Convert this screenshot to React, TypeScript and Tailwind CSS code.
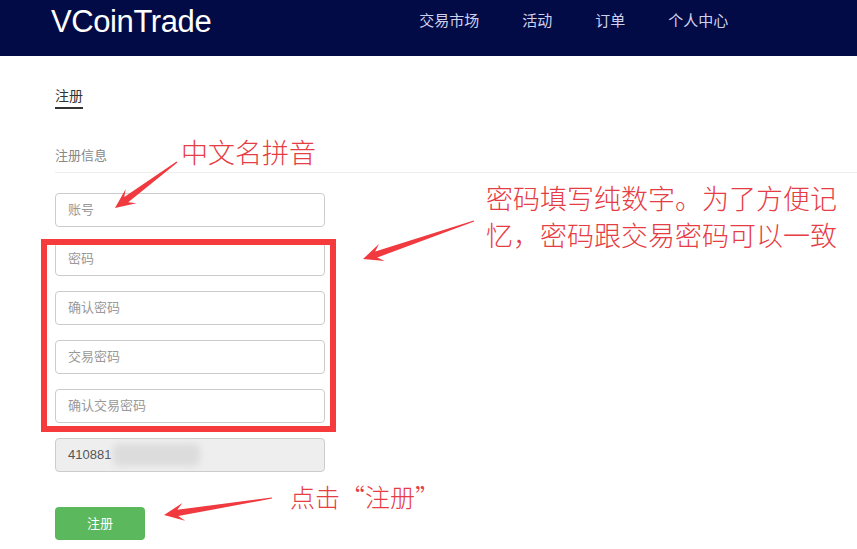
const NAV = ["交易市场", "活动", "订单", "个人中心"];

const PASSWORD_FIELDS = ["密码", "确认密码", "交易密码", "确认交易密码"];

type Pt = [number, number];

// red hand-drawn style arrow: thin tail, widening shaft, notched head
function arrowPoints(tail: Pt, tip: Pt): string {
  const dx = tip[0] - tail[0];
  const dy = tip[1] - tail[1];
  const len = Math.hypot(dx, dy);
  const d: Pt = [dx / len, dy / len];
  const n: Pt = [-d[1], d[0]];
  const H = 20;
  const at = (base: Pt, back: number, side: number): string =>
    `${(base[0] - d[0] * back + n[0] * side).toFixed(1)},${(base[1] - d[1] * back + n[1] * side).toFixed(1)}`;
  return [
    at(tail, 0, 0.6),
    at(tip, H * 0.7, 3.2),
    at(tip, H, 9),
    at(tip, 0, 0),
    at(tip, H, -9),
    at(tip, H * 0.7, -3.2),
    at(tail, 0, -0.6),
  ].join(" ");
}

const ARROWS: [Pt, Pt][] = [
  [[177, 162], [115, 208]],
  [[474, 221], [363, 259]],
  [[272, 498], [164, 515]],
];

const NOTE_FONT = { fontFamily: '"Noto Sans CJK SC", sans-serif' };

function Field({ placeholder }: { placeholder: string }) {
  return (
    <div className="flex h-[34px] w-[270px] items-center rounded-[4px] border border-[#cccccc] bg-white px-[12px] text-[13px] text-[#999999]">
      {placeholder}
    </div>
  );
}

export default function App() {
  return (
    <div
      className="relative h-[549px] w-[857px] overflow-hidden bg-white"
      style={{ fontFamily: '"Liberation Sans", "Noto Sans CJK SC", sans-serif' }}
    >
      <header className="h-[56px] bg-[#020b45]">
        <div className="flex h-[42px] items-center">
          <div className="ml-[51px] text-[31px] leading-none tracking-[-0.4px] text-white">VCoinTrade</div>
          <nav className="ml-[208px] flex gap-[43px] text-[15px] text-[#cfd0ee]">
            {NAV.map((item) => (
              <span key={item}>{item}</span>
            ))}
          </nav>
        </div>
      </header>

      <main className="px-[55px] pt-[30px]">
        <div className="flex">
          <div className="border-b-2 border-[#333333] pb-[1px] text-[14px] leading-[20px] text-[#333333]">注册</div>
        </div>

        <div className="mt-[37px] mr-[-55px] border-b border-[#eeeeee] pb-[6px] text-[13px] leading-[20px] text-[#888888]">
          注册信息
        </div>

        <div className="mt-[20px] flex flex-col gap-[15px]">
          <Field placeholder="账号" />
          <div className="relative flex flex-col gap-[15px]">
            {PASSWORD_FIELDS.map((p) => (
              <Field key={p} placeholder={p} />
            ))}
            <div className="absolute left-[-14px] top-[-3px] h-[193px] w-[295px] border-[6px] border-[#f53b3b]" />
          </div>
          <div className="flex h-[34px] w-[270px] items-center rounded-[4px] border border-[#cccccc] bg-[#eeeeee] px-[12px] text-[13px] text-[#555555]">
            410881
            <span className="ml-[2px] h-[22px] w-[87px] rounded-[6px] bg-[#dcdcdc] blur-[3px]" />
          </div>
        </div>

        <button
          type="button"
          className="mt-[35px] flex h-[33px] w-[90px] items-center justify-center rounded-[4px] bg-[#5cb85c] text-[13px] text-white"
        >
          注册
        </button>
      </main>

      {/* annotations drawn over the page */}
      <div
        className="absolute left-[181px] top-[134px] text-[27px] font-light leading-[36px] text-[#e63c44]"
        style={NOTE_FONT}
      >
        中文名拼音
      </div>
      <div
        className="absolute left-[486px] top-[179px] w-[370px] text-[27px] font-light leading-[37px] text-[#e63c44]"
        style={NOTE_FONT}
      >
        密码填写纯数字。为了方便记
        <br />
        忆，密码跟交易密码可以一致
      </div>
      <div
        className="absolute left-[290px] top-[478px] text-[25px] font-light leading-[36px] text-[#e63c44]"
        style={NOTE_FONT}
      >
        点击“注册”
      </div>

      <svg className="pointer-events-none absolute left-0 top-0" width={857} height={549}>
        {ARROWS.map(([tail, tip], i) => (
          <polygon key={i} points={arrowPoints(tail, tip)} fill="#f03a3f" />
        ))}
      </svg>
    </div>
  );
}
